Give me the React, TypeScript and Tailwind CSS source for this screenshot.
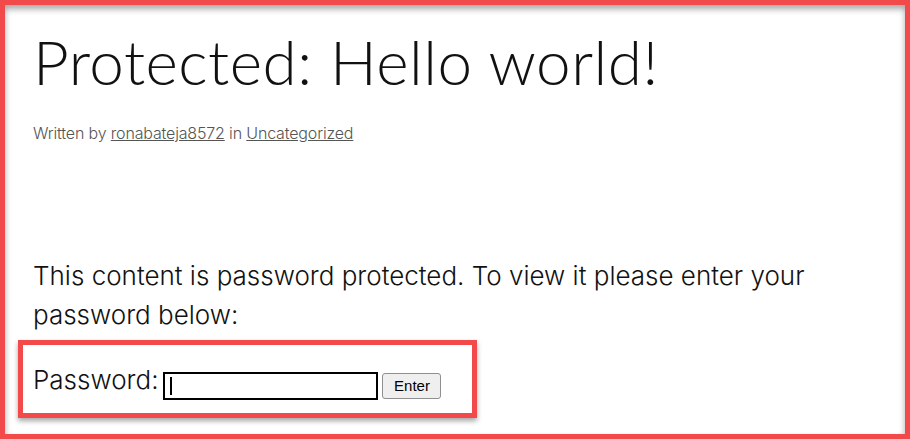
import React from "react";

export default function App() {
  return (
    <div className="w-[910px] h-[439px] bg-white overflow-hidden">
      <div className="relative h-full w-full border-[5px] border-[#f24a4a] shadow-[inset_0_4px_6px_rgba(0,0,0,0.35)] pl-[28px] pr-4">
        <h1
          className="pt-[19px] text-[62px] leading-[74px] font-light text-[#111] tracking-[0.008em]"
          style={{ fontFamily: "Lato, 'Noto Sans', sans-serif" }}
        >
          Protected: Hello world!
        </h1>
        <p
          className="mt-[25px] text-[16px] leading-[20px] font-light text-[#555] tracking-[-0.01em]"
          style={{ fontFamily: "Inter, 'Noto Sans', sans-serif" }}
        >
          Written by <span className="underline">ronabateja8572</span> in{" "}
          <span className="underline">Uncategorized</span>
        </p>
        <p
          className="mt-[113px] text-[26px] leading-[39px] font-light text-[#111] w-[820px]"
          style={{ fontFamily: "Inter, 'Noto Sans', sans-serif" }}
        >
          This content is password protected. To view it please enter your password below:
        </p>
        <div className="mt-[6px] ml-[-15px] w-[459px] h-[78px] border-[5px] border-[#f24a4a] shadow-[0_3px_5px_rgba(0,0,0,0.35)] flex items-center pl-[10px] pt-[14px]">
          <span
            className="text-[26px] font-light text-[#111] mb-[14px]"
            style={{ fontFamily: "Inter, 'Noto Sans', sans-serif" }}
          >
            Password:
          </span>
          <div className="ml-[5px] w-[215px] h-[28px] border-2 border-black bg-white flex items-center pl-[5px]">
            <div className="w-[2px] h-[18px] bg-black" />
          </div>
          <button
            className="ml-[4px] w-[59px] h-[26px] border border-[#8f8f8f] rounded-[3px] bg-[#efefef] text-[15px] text-black"
            style={{ fontFamily: "'Liberation Sans', Arial, sans-serif" }}
          >
            Enter
          </button>
        </div>
      </div>
    </div>
  );
}
